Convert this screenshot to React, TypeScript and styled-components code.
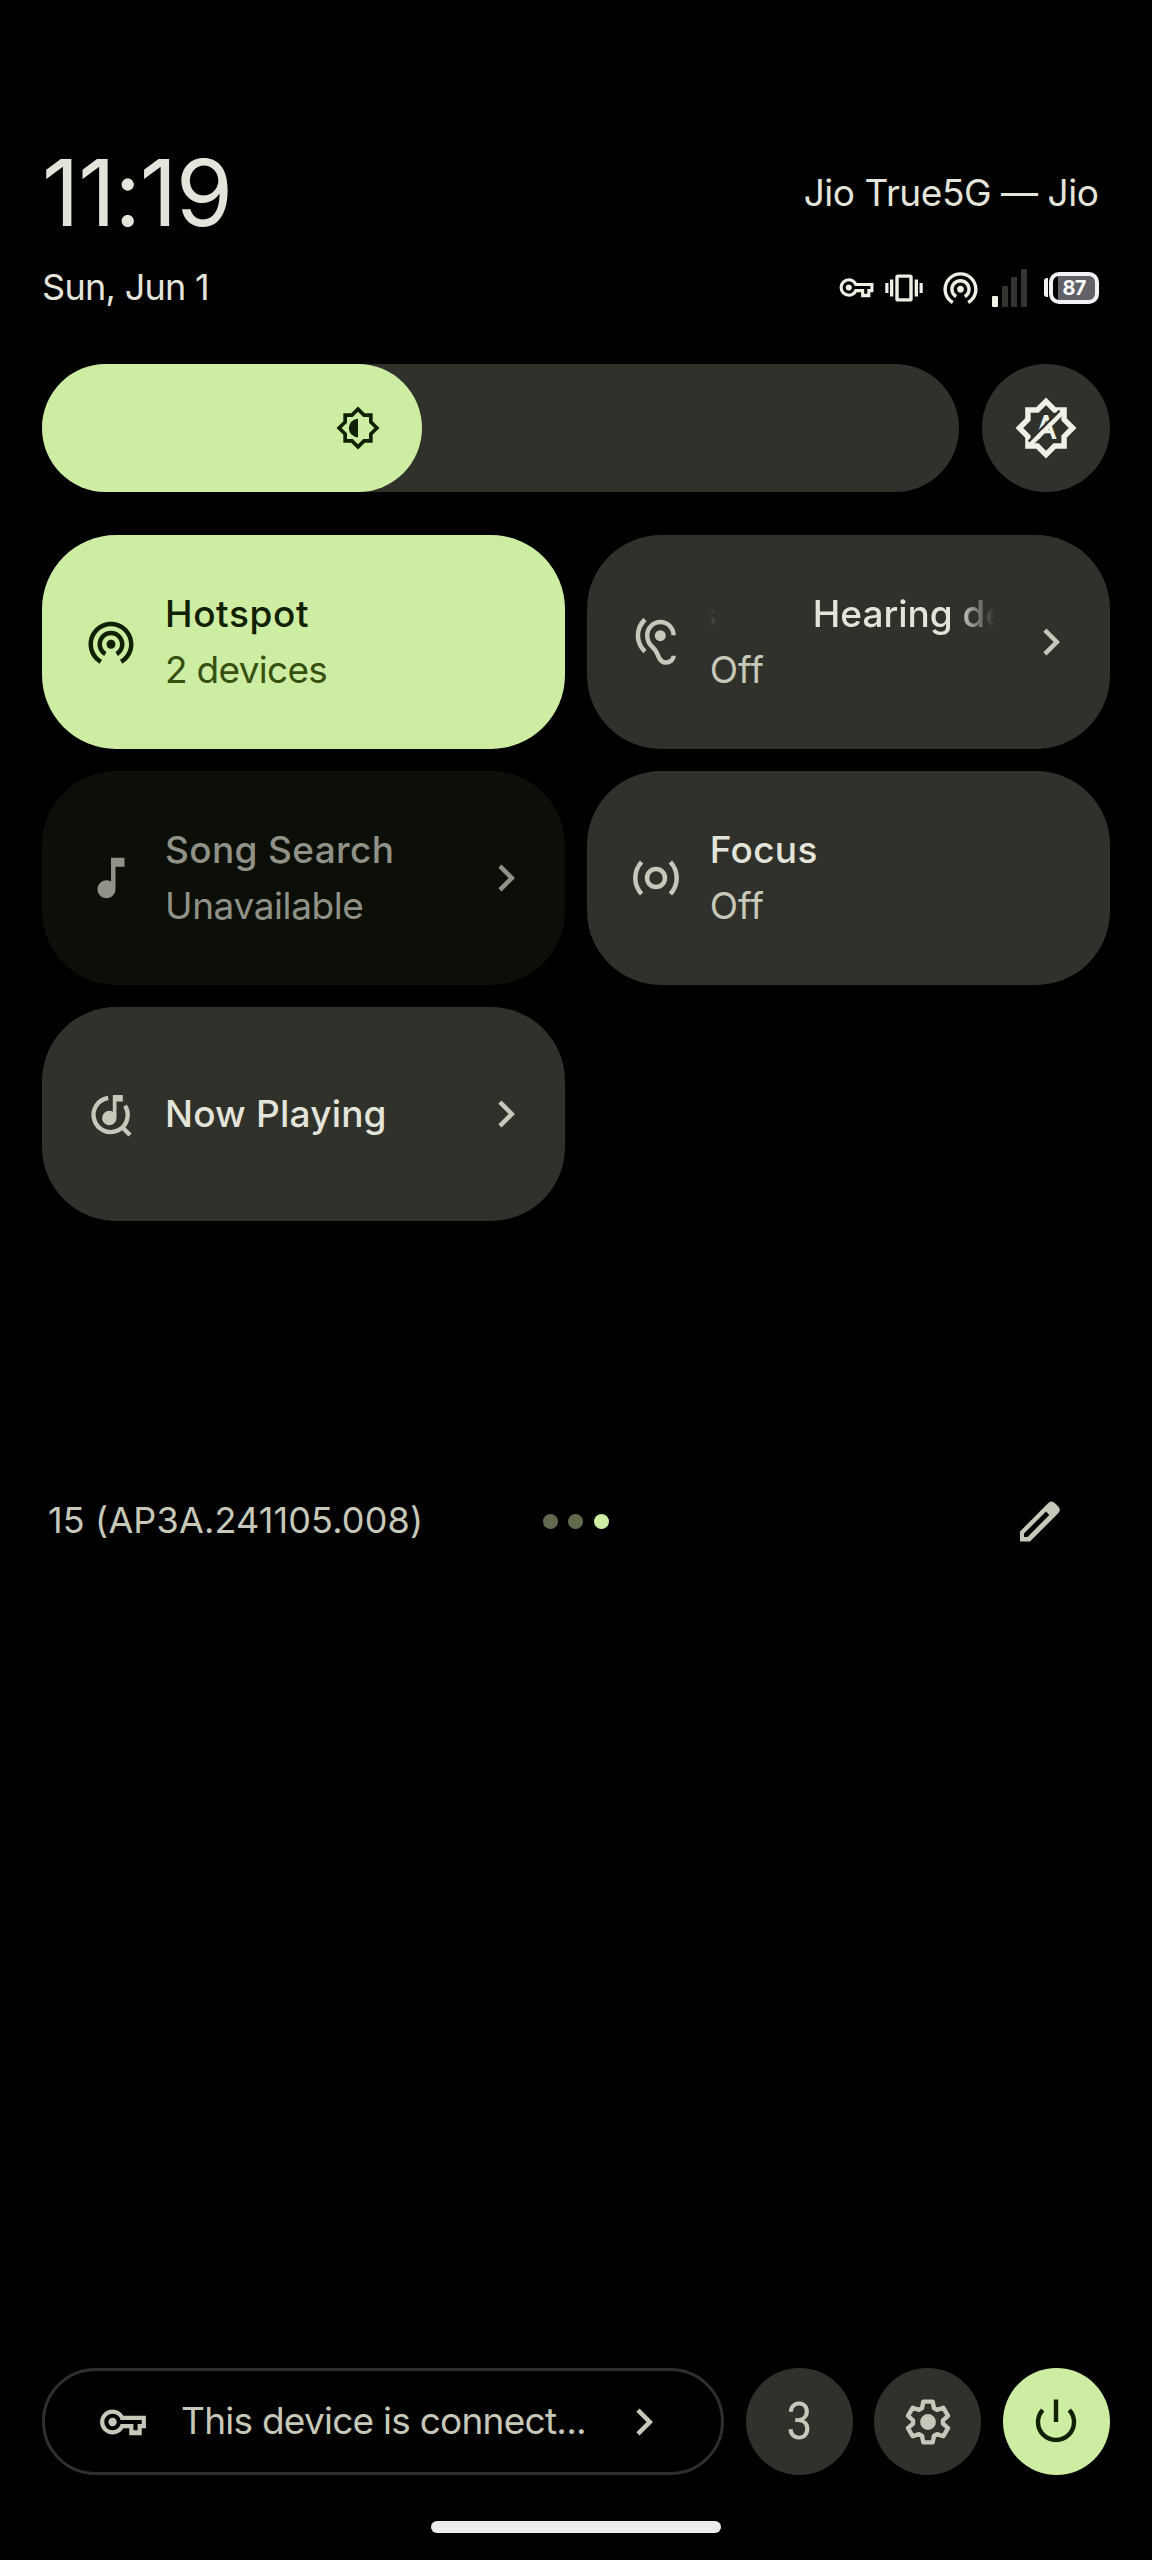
import React from "react";
import styled, { createGlobalStyle } from "styled-components";
import { MdWifiTethering, MdMusicNote, MdChevronRight } from "react-icons/md";

const color = {
  text: "#e3e4da",
  muted: "#c6c8b9",
  surface: "#30312b",
  accent: "#cdeda3",
  onAccent: "#102000",
  onAccentMuted: "#36500f",
  disabled: "#0c0f08",
  onDisabled: "#909287",
};

const GlobalStyle = createGlobalStyle`
  body { margin: 0; background: #000; }
  * { box-sizing: border-box; }
  svg { display: block; flex: none; }
`;

const Screen = styled.main`
  width: 1152px;
  height: 2560px;
  background: #000;
  color: ${color.text};
  font-family: Inter, "Liberation Sans", sans-serif;
  display: flex;
  flex-direction: column;
  padding: 144px 42.5px 27px 42px;
  overflow: hidden;
`;

const Header = styled.header`
  display: flex;
  flex-direction: column;
`;

const HeaderRow = styled.div<{ $height: number }>`
  height: ${(p) => p.$height}px;
  display: flex;
  align-items: center;
  justify-content: space-between;
  padding-right: 11px;
`;

const Label = styled.span<{ $size: number; $spacing?: number; $weight?: number }>`
  font-size: ${(p) => p.$size}px;
  font-weight: ${(p) => p.$weight ?? 400};
  letter-spacing: ${(p) => p.$spacing ?? 0}px;
  line-height: 1.2;
  white-space: pre;
`;

const StatusIcons = styled.div`
  display: flex;
  align-items: center;
  color: #eff0e4;
`;

const StatusSlot = styled.div<{ $gap: number }>`
  margin-left: ${(p) => p.$gap}px;
`;

const SignalBars = styled.div`
  display: flex;
  align-items: flex-end;
  gap: 3.5px;
  height: 38px;
`;

const SignalBar = styled.i<{ $height: number; $on?: boolean }>`
  width: 6px;
  height: ${(p) => p.$height}px;
  border-radius: 1px;
  background: ${(p) => (p.$on ? "#f2f3e8" : "#343431")};
`;

const Battery = styled.div`
  display: flex;
  align-items: center;
  gap: 1px;
`;

const BatteryTip = styled.i`
  width: 4px;
  height: 19px;
  border-radius: 3px 0 0 3px;
  background: #f1f2f4;
`;

const BatteryBody = styled.div`
  width: 50px;
  height: 32px;
  border: 4px solid #f1f2f4;
  border-radius: 10px;
  background: linear-gradient(to right, #000 5px, #606268 5px);
  color: #fff;
  font-size: 20px;
  font-weight: 700;
  line-height: 24px;
  letter-spacing: -0.8px;
  padding-left: 1px;
  text-align: center;
`;

const BrightnessRow = styled.section`
  display: flex;
  justify-content: space-between;
  margin-top: 31px;
`;

const Slider = styled.div`
  width: 917px;
  height: 128px;
  border-radius: 64px;
  background: ${color.surface};
`;

const SliderFill = styled.div`
  width: 380px;
  height: 128px;
  border-radius: 64px;
  background: ${color.accent};
  color: ${color.onAccent};
  display: flex;
  align-items: center;
  justify-content: flex-end;
  padding-right: 42px;
`;

const RoundButton = styled.div<{ $size: number; $accent?: boolean }>`
  width: ${(p) => p.$size}px;
  height: ${(p) => p.$size}px;
  border-radius: 50%;
  flex: none;
  display: flex;
  align-items: center;
  justify-content: center;
  background: ${(p) => (p.$accent ? color.accent : color.surface)};
  color: ${(p) => (p.$accent ? color.onAccent : color.muted)};
`;

const TileGrid = styled.section`
  display: grid;
  grid-template-columns: repeat(2, minmax(0, 1fr));
  grid-auto-rows: 214px;
  gap: 22px;
  margin-top: 43px;
`;

type Tone = "on" | "off" | "disabled";

const Tile = styled.div<{ $tone: Tone }>`
  border-radius: 74px;
  display: flex;
  align-items: center;
  padding: 0 32px 0 42px;
  background: ${(p) => (p.$tone === "on" ? color.accent : p.$tone === "off" ? color.surface : color.disabled)};
  color: ${(p) => (p.$tone === "on" ? color.onAccent : p.$tone === "off" ? color.muted : color.onDisabled)};
`;

const TileText = styled.div`
  flex: 1;
  min-width: 0;
  margin: 0 25px 0 27px;
`;

const TileTitle = styled.div<{ $tone: Tone; $spacing?: number }>`
  font-size: 37px;
  font-weight: 500;
  line-height: 56px;
  letter-spacing: ${(p) => p.$spacing ?? 0}px;
  white-space: nowrap;
  color: ${(p) => (p.$tone === "off" ? color.text : "inherit")};
`;

const TileSub = styled.div<{ $tone: Tone; $spacing?: number }>`
  font-size: 37px;
  line-height: 56px;
  letter-spacing: ${(p) => p.$spacing ?? 0}px;
  color: ${(p) => (p.$tone === "on" ? color.onAccentMuted : "inherit")};
`;

const Marquee = styled.div`
  overflow: hidden;
  mask-image: linear-gradient(to right, transparent, #000 32px, #000 calc(100% - 44px), transparent calc(100% - 4px));
`;

const MarqueeTrack = styled.div`
  display: flex;
  gap: 96px;
  width: max-content;
  transform: translateX(calc(-50% + 55px));
`;

const FooterRow = styled.section`
  display: grid;
  grid-template-columns: 1fr auto 1fr;
  align-items: center;
  height: 56px;
  margin-top: 272px;
  padding: 0 43px 0 6px;
  color: ${color.muted};
`;

const Dots = styled.div`
  display: flex;
  gap: 10.5px;
  margin-left: 37px;
`;

const Dot = styled.i<{ $active?: boolean }>`
  width: 15px;
  height: 15px;
  border-radius: 50%;
  background: ${(p) => (p.$active ? color.accent : "#616a4c")};
`;

const PencilSlot = styled.div`
  justify-self: end;
`;

const Actions = styled.section`
  margin-top: auto;
  display: flex;
  justify-content: space-between;
`;

const VpnPill = styled.div`
  width: 682px;
  height: 107px;
  border: 3px solid #2f302b;
  border-radius: 54px;
  display: flex;
  align-items: center;
  padding: 0 50px 0 53px;
  color: ${color.muted};
`;

const VpnText = styled.div`
  flex: 1;
  margin-left: 33px;
  display: flex;
`;

const UserCount = styled.span`
  font: 400 51px/1 Roboto, "Liberation Sans", sans-serif;
  transform: scaleX(0.9);
`;

const HomeHandle = styled.div`
  width: 290px;
  height: 12px;
  border-radius: 6px;
  background: #ececec;
  margin: 46px auto 0;
`;

const KeyIcon = ({ size }: { size: number }) => (
  <svg width={size} height={size} viewBox="0 -960 960 960" fill="currentColor">
    <path d="M280-240q-100 0-170-70T40-480q0-100 70-170t170-70q66 0 121 33t87 87h432v240h-80v135H600v-135H488q-32 54-87 87t-121 33Zm0-80q66 0 106-40.5t48-79.5h246v120h80v-120h80v-80H434q-8-39-48-79.5T280-640q-66 0-113 47t-47 113q0 66 47 113t113 47Zm0-80q-33 0-56.500-23.500T200-480q0-33 23.500-56.500T280-560q33 0 56.500 23.500T360-480q0 33-23.500 56.500T280-400Z" />
  </svg>
);

const VibrateIcon = () => (
  <svg width="38" height="28" viewBox="0 0 38 28" fill="currentColor">
    <rect x="12" y="2.100" width="14" height="23.800" rx="1" fill="none" stroke="currentColor" strokeWidth="3.400" />
    <rect x="5" y="5.500" width="3.300" height="17" />
    <rect x="0.300" y="9" width="3.200" height="10" />
    <rect x="29.700" y="5.500" width="3.300" height="17" />
    <rect x="34.500" y="9" width="3.200" height="10" />
  </svg>
);

const STAR = "M19 8.690V5h-3.690L12 1.690 8.690 5H5v3.690L1.690 12 5 15.310V19h3.690L12 22.310 15.310 19H19v-3.690L22.310 12z";

const BrightnessIcon = () => (
  <svg width="44" height="44" viewBox="0 0 24 24">
    <path d={STAR} fill="none" stroke="currentColor" strokeWidth="2" />
    <path d="M12 7a5 5 0 0 0 0 10z" fill="currentColor" />
  </svg>
);

const AutoBrightnessIcon = () => (
  <svg width="62" height="62" viewBox="0 0 24 24" color="#f0f1e6">
    <path d={STAR} fill="none" stroke="currentColor" strokeWidth="2.100" />
    <text x="12" y="16.100" textAnchor="middle" fill="currentColor" fontFamily="Roboto" fontWeight="500" fontSize="12.500">
      A
    </text>
    <path d="M5.300 17.300 17.300 5.300" stroke={color.surface} strokeWidth="1" />
    <path d="M6 18.400 18.400 6" stroke="currentColor" strokeWidth="1.700" />
  </svg>
);

const HearingIcon = () => (
  <svg width="54" height="54" viewBox="0 0 54 54" fill="none" stroke="currentColor" strokeWidth="4.500">
    <path d="M44.600 20.300A13.200 13.200 0 0 0 18.200 20.300C18.200 26 20.500 29.500 23.500 32C28 36 28 39 30 42.500C31.500 46 34 47.500 37 47.500C41.300 47.500 44.600 44.500 44.600 40.800" />
    <path d="M16 4.500C11.300 9 8.900 14 8.900 20.500S11.300 32 16 36.500" />
    <circle cx="31.300" cy="20.700" r="5.500" fill="currentColor" stroke="none" />
  </svg>
);

const FocusIcon = () => (
  <svg width="54" height="54" viewBox="0 0 54 54" fill="none" stroke="currentColor" strokeWidth="4.500">
    <circle cx="27" cy="27" r="9" />
    <path d="M12.600 11A23.500 23.500 0 0 0 12.600 43" />
    <path d="M41.400 11A23.500 23.500 0 0 1 41.400 43" />
  </svg>
);

const NowPlayingIcon = () => (
  <svg width="54" height="54" viewBox="0 0 54 54" fill="none" stroke="currentColor" strokeWidth="4.400">
    <path d="M24.200 11A17.100 17.100 0 1 0 41 18.700" />
    <path d="M37.500 39.500 46 48" />
    <path d="M28.800 8H38.800V14.500H32.500V31A7.200 7.200 0 1 1 28.800 24.800Z" fill="currentColor" stroke="none" />
  </svg>
);

const PencilIcon = () => (
  <svg width="54" height="54" viewBox="0 0 54 54" fill="currentColor" fillRule="evenodd">
    <path d="M7 37.500 35 9.200Q38.500 5.800 42 9.200L45.200 12.400Q48.500 15.800 45.200 19.300L17 47.500H7ZM11 39.500V43H14.500L36.300 21 33 17.600Z" />
  </svg>
);

const GearIcon = () => {
  const tooth = [[-6, -13.8], [-4.700, -20.400], [4.700, -20.400], [6, -13.8]];
  const points = Array.from({ length: 6 }, (_, i) => (i * Math.PI) / 3).flatMap((a) =>
    tooth.map(([x, y]) =>
      [27 + x * Math.cos(a) - y * Math.sin(a), 27 + x * Math.sin(a) + y * Math.cos(a)].map((n) => n.toFixed(2)).join(",")
    )
  );
  return (
    <svg width="54" height="54" viewBox="0 0 54 54">
      <polygon points={points.join(" ")} fill="none" stroke="currentColor" strokeWidth="4.400" strokeLinejoin="round" />
      <circle cx="27" cy="27" r="7.900" fill="currentColor" />
    </svg>
  );
};

const PowerIcon = () => (
  <svg width="54" height="54" viewBox="0 0 54 54" fill="none" stroke="currentColor" strokeWidth="4.400">
    <path d="M27 4.500V27" />
    <path d="M13.700 14.900A18 18 0 1 0 40.300 14.900" />
  </svg>
);

export default function App() {
  return (
    <Screen>
      <GlobalStyle />
      <Header>
        <HeaderRow $height={98}>
          <Label $size={92} $spacing={-1.2}>11:19</Label>
          <Label $size={37} $spacing={-0.45}>Jio True5G — Jio</Label>
        </HeaderRow>
        <HeaderRow $height={91}>
          <Label $size={36} $spacing={-0.7}>Sun, Jun 1</Label>
          <StatusIcons>
            <KeyIcon size={37} />
            <StatusSlot $gap={10}><VibrateIcon /></StatusSlot>
            <StatusSlot $gap={17}><MdWifiTethering size={41} /></StatusSlot>
            <StatusSlot $gap={11}>
              <SignalBars>
                <SignalBar $height={11} $on />
                <SignalBar $height={21} />
                <SignalBar $height={30} />
                <SignalBar $height={38} />
              </SignalBars>
            </StatusSlot>
            <StatusSlot $gap={17}>
              <Battery>
                <BatteryTip />
                <BatteryBody>87</BatteryBody>
              </Battery>
            </StatusSlot>
          </StatusIcons>
        </HeaderRow>
      </Header>

      <BrightnessRow>
        <Slider>
          <SliderFill><BrightnessIcon /></SliderFill>
        </Slider>
        <RoundButton $size={128}><AutoBrightnessIcon /></RoundButton>
      </BrightnessRow>

      <TileGrid>
        <Tile $tone="on">
          <MdWifiTethering size={54} />
          <TileText>
            <TileTitle $tone="on" $spacing={0.6}>Hotspot</TileTitle>
            <TileSub $tone="on" $spacing={-0.7}>2 devices</TileSub>
          </TileText>
        </Tile>
        <Tile $tone="off">
          <HearingIcon />
          <TileText>
            <Marquee>
              <MarqueeTrack>
                <TileTitle $tone="off">Hearing devices</TileTitle>
                <TileTitle $tone="off">Hearing devices</TileTitle>
              </MarqueeTrack>
            </Marquee>
            <TileSub $tone="off">Off</TileSub>
          </TileText>
          <MdChevronRight size={54} />
        </Tile>
        <Tile $tone="disabled">
          <MdMusicNote size={54} />
          <TileText>
            <TileTitle $tone="disabled" $spacing={0.35}>Song Search</TileTitle>
            <TileSub $tone="disabled" $spacing={-0.4}>Unavailable</TileSub>
          </TileText>
          <MdChevronRight size={54} />
        </Tile>
        <Tile $tone="off">
          <FocusIcon />
          <TileText>
            <TileTitle $tone="off" $spacing={0.3}>Focus</TileTitle>
            <TileSub $tone="off">Off</TileSub>
          </TileText>
        </Tile>
        <Tile $tone="off">
          <NowPlayingIcon />
          <TileText>
            <TileTitle $tone="off" $spacing={0.2}>Now Playing</TileTitle>
          </TileText>
          <MdChevronRight size={54} />
        </Tile>
      </TileGrid>

      <FooterRow>
        <Label $size={36} $spacing={0.15}>15 (AP3A.241105.008)</Label>
        <Dots>
          <Dot />
          <Dot />
          <Dot $active />
        </Dots>
        <PencilSlot><PencilIcon /></PencilSlot>
      </FooterRow>

      <Actions>
        <VpnPill>
          <KeyIcon size={50} />
          <VpnText><Label $size={37} $spacing={-0.75}>This device is connect...</Label></VpnText>
          <MdChevronRight size={54} />
        </VpnPill>
        <RoundButton $size={107}><UserCount>3</UserCount></RoundButton>
        <RoundButton $size={107}><GearIcon /></RoundButton>
        <RoundButton $size={107} $accent><PowerIcon /></RoundButton>
      </Actions>
      <HomeHandle />
    </Screen>
  );
}
